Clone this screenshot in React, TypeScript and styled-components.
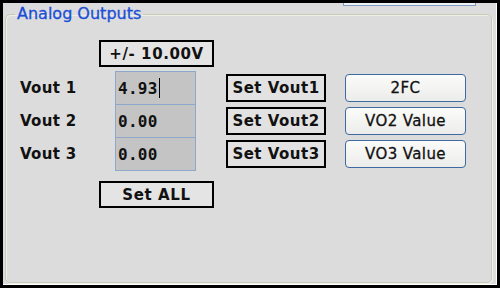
import React from "react";
import styled, { createGlobalStyle } from "styled-components";

const GlobalStyle = createGlobalStyle`
  html, body {
    margin: 0;
    padding: 0;
    background: #000;
  }
  * {
    box-sizing: border-box;
  }
`;

const Window = styled("div")`
  width: 500px;
  height: 288px;
  border: 3px solid #000;
  background: #dcdcdc;
  box-shadow: inset -1px -1px 0 #ffffff;
  display: flex;
  flex-direction: column;
  font-family: "DejaVu Sans", "Liberation Sans", sans-serif;
  color: #111;
`;

const TopStrip = styled("div")`
  height: 3px;
  display: flex;
`;

const CutButton = styled("div")`
  margin-left: 340px;
  width: 133px;
  height: 3px;
  border: 1px solid #7f9cc4;
  border-top: none;
  background: #eef0f3;
`;

const Group = styled("fieldset")`
  flex: 1;
  margin: 0 5px 2px 2px;
  padding: 18px 0 0 14px;
  min-width: 0;
  border: 1px solid #c8c9b8;
  border-radius: 5px;
  box-shadow: inset 1px 1px 0 #efefe8, 1px 1px 0 #efefe8;
`;

const Title = styled("legend")`
  margin-left: -5px;
  padding: 0 2px;
  font-size: 16px;
  line-height: 16px;
  color: #1a4ed8;
  -webkit-text-stroke: 0.3px #1a4ed8;
`;

const WideBox = styled("div")<{ $top?: number }>`
  margin-left: 79px;
  margin-top: ${(p) => p.$top || 0}px;
  width: 115px;
  height: 27px;
  border: 2px solid #000;
  background: #e4e4e4;
  display: flex;
  align-items: center;
  justify-content: center;
  font-weight: 700;
  font-size: 15px;
  letter-spacing: 0.6px;
`;

const Rows = styled("div")`
  margin-top: 4px;
  display: flex;
  flex-direction: column;
`;

const Row = styled("div")`
  display: flex;
  align-items: center;
  height: 34px;
  & + & {
    margin-top: -1px;
  }
`;

const Label = styled("div")`
  width: 95px;
  font-weight: 700;
  font-size: 15px;
  letter-spacing: 0.3px;
`;

const Field = styled("div")`
  width: 81px;
  height: 34px;
  border: 1px solid #8ea8cc;
  background: #c4c4c4;
  padding-left: 2px;
  display: flex;
  align-items: center;
  font-family: "DejaVu Sans Mono", "Liberation Mono", monospace;
  font-size: 16px;
  font-weight: 700;
  letter-spacing: 0.3px;
`;

const Caret = styled("span")`
  display: inline-block;
  width: 1px;
  height: 20px;
  margin-left: 1px;
  background: #000;
`;

const SetButton = styled("button")`
  margin-left: 30px;
  width: 100px;
  height: 28px;
  padding: 0;
  border: 2px solid #000;
  background: #e2e2e2;
  font: inherit;
  font-weight: 700;
  font-size: 15px;
  letter-spacing: 0.5px;
  color: #111;
`;

const ValueButton = styled("button")`
  margin-left: 19px;
  width: 121px;
  height: 28px;
  padding: 0;
  border: 1px solid #3d6aa0;
  border-radius: 4px;
  background: linear-gradient(#fbfbfa, #ececea);
  font: inherit;
  font-size: 15px;
  letter-spacing: 0.4px;
  color: #111;
  -webkit-text-stroke: 0.3px #111;
`;

const outputs = [
  { name: "Vout 1", value: "4.93", set: "Set Vout1", action: "2FC", focused: true },
  { name: "Vout 2", value: "0.00", set: "Set Vout2", action: "VO2 Value" },
  { name: "Vout 3", value: "0.00", set: "Set Vout3", action: "VO3 Value" },
];

export default function App() {
  return (
    <>
      <GlobalStyle />
      <Window>
        <TopStrip>
          <CutButton />
        </TopStrip>
        <Group>
          <Title>Analog Outputs</Title>
          <WideBox>+/- 10.00V</WideBox>
          <Rows>
            {outputs.map((o) => (
              <Row key={o.name}>
                <Label>{o.name}</Label>
                <Field>
                  {o.value}
                  {o.focused && <Caret />}
                </Field>
                <SetButton>{o.set}</SetButton>
                <ValueButton>{o.action}</ValueButton>
              </Row>
            ))}
          </Rows>
          <WideBox $top={10}>Set ALL</WideBox>
        </Group>
      </Window>
    </>
  );
}
